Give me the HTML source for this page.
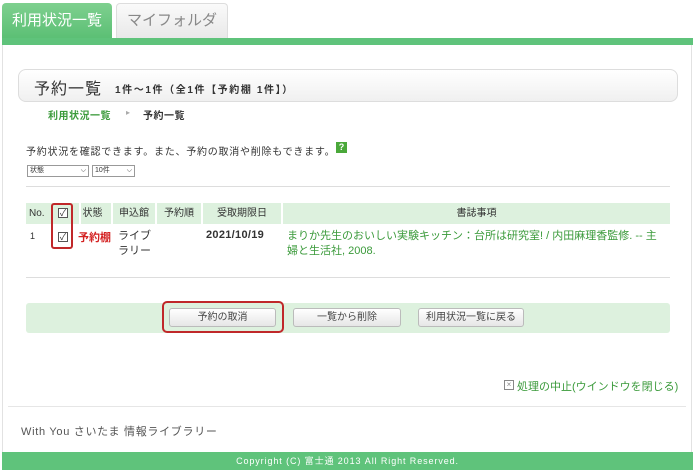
<!DOCTYPE html>
<html><head><meta charset="utf-8"><style>
*{margin:0;padding:0;box-sizing:border-box}
body{width:695px;height:473px;background:#fff;font-family:"Liberation Sans","Noto Sans CJK JP",sans-serif;color:#333;position:relative;overflow:hidden;font-size:11px}
.a{position:absolute}
.tab1{left:2px;top:3px;width:110px;height:36px;background:linear-gradient(#7fd08f,#5bbf74);color:#fff;font-size:15px;line-height:36px;text-align:center;border-radius:4px 4px 0 0}
.tab2{left:116px;top:3px;width:112px;height:36px;background:linear-gradient(#fafafa,#e8e8e8);border:1px solid #ddd;border-bottom:none;color:#888;font-size:15px;line-height:34px;text-align:center;border-radius:4px 4px 0 0}
.bar{left:2px;top:38px;width:691px;height:7px;background:#5fc37b}
.frame{left:2px;top:45px;width:690px;height:408px;border-left:1px solid #e2e2e2;border-right:1px solid #e2e2e2}
.title{left:18px;top:69px;width:660px;height:33px;border:1px solid #ddd;border-radius:8px;background:linear-gradient(#fff,#f0f0f0)}
.btn{top:308px;height:19px;border:1px solid #bbb;border-radius:3px;background:linear-gradient(#fff,#e6e6e6);font-size:10px;text-align:center;line-height:17px;color:#444}
.hr{height:1px;background:#ddd}
.cb{width:10px;height:10px;border:1px solid #555;font-size:9px;line-height:8px;text-align:center;background:#fff}
.h{position:absolute;top:0;text-align:center}
</style></head><body>
<div class="a tab1">利用状況一覧</div>
<div class="a tab2">マイフォルダ</div>
<div class="a bar"></div>
<div class="a frame"></div>
<div class="a title"></div>
<div class="a" style="left:34px;top:75px;font-size:16px;color:#333;letter-spacing:1px">予約一覧</div>
<div class="a" style="left:115px;top:81px;font-size:10px;font-weight:bold;color:#333;letter-spacing:1.6px">1件～1件（全1件【予約棚 1件】）</div>
<div class="a" style="left:48px;top:107px;font-size:10px;font-weight:bold;color:#3a9a3a;letter-spacing:0.5px">利用状況一覧</div>
<div class="a" style="left:126px;top:108px;font-size:8px;color:#aaa">▸</div>
<div class="a" style="left:143px;top:107px;font-size:10px;font-weight:bold;letter-spacing:0.5px">予約一覧</div>
<div class="a" style="left:26px;top:143px;font-size:10px;letter-spacing:0.75px">予約状況を確認できます。また、予約の取消や削除もできます。</div>
<div class="a" style="left:336px;top:142px;width:11px;height:11px;background:#4aa83a;color:#fff;font-size:9px;line-height:11px;text-align:center;font-weight:bold">?</div>
<div class="a" style="left:27px;top:165px;width:62px;height:12px;border:1px solid #999;font-size:7px;line-height:10px;padding-left:2px">状態<span style="position:absolute;right:2px">⌵</span></div>
<div class="a" style="left:92px;top:165px;width:43px;height:12px;border:1px solid #999;font-size:7px;line-height:10px;padding-left:2px">10件<span style="position:absolute;right:2px">⌵</span></div>
<div class="a hr" style="left:26px;top:186px;width:644px"></div>
<div class="a" style="left:26px;top:203px;width:644px;height:21px;background:#ddf1de"></div>
<div class="a" style="left:26px;top:203px;width:644px;height:21px;font-size:10px;line-height:21px">
<span class="h" style="left:3px">No.</span>
<span class="h" style="left:53px;width:27px">状態</span>
<span class="h" style="left:87px;width:42px">申込館</span>
<span class="h" style="left:131px;width:44px">予約順</span>
<span class="h" style="left:177px;width:78px">受取期限日</span>
<span class="h" style="left:257px;width:387px">書誌事項</span>
</div>
<div class="a" style="left:79px;top:203px;width:2px;height:21px;background:#fff"></div>
<div class="a" style="left:111px;top:203px;width:2px;height:21px;background:#fff"></div>
<div class="a" style="left:155px;top:203px;width:2px;height:21px;background:#fff"></div>
<div class="a" style="left:201px;top:203px;width:2px;height:21px;background:#fff"></div>
<div class="a" style="left:281px;top:203px;width:2px;height:21px;background:#fff"></div>
<div class="a cb" style="left:58px;top:208px">✓</div>
<div class="a cb" style="left:58px;top:232px">✓</div>
<div class="a" style="left:51px;top:203px;width:22px;height:46px;border:2px solid #c0282a;border-radius:3px"></div>
<div class="a" style="left:30px;top:231px;font-size:9px">1</div>
<div class="a" style="left:78px;top:229px;font-size:11px;color:#d32020;font-weight:bold">予約棚</div>
<div class="a" style="left:118px;top:229px;font-size:11px;line-height:15px">ライブ<br>ラリー</div>
<div class="a" style="left:206px;top:229px;font-size:11px;font-weight:bold;letter-spacing:0.3px">2021/10/19</div>
<div class="a" style="left:287px;top:229px;width:380px;font-size:11px;line-height:15px;color:#3a9a3a">まりか先生のおいしい実験キッチン：台所は研究室! / 内田麻理香監修. -- 主婦と生活社, 2008.</div>
<div class="a hr" style="left:26px;top:277px;width:644px"></div>
<div class="a" style="left:26px;top:303px;width:644px;height:30px;background:#ddf1de;border-radius:3px"></div>
<div class="a btn" style="left:169px;width:107px">予約の取消</div>
<div class="a btn" style="left:293px;width:108px">一覧から削除</div>
<div class="a btn" style="left:418px;width:106px">利用状況一覧に戻る</div>
<div class="a" style="left:162px;top:301px;width:122px;height:32px;border:2px solid #c0282a;border-radius:5px"></div>
<div class="a" style="left:504px;top:380px;width:10px;height:10px;border:1px solid #888;font-size:8px;line-height:8px;text-align:center;color:#888">×</div>
<div class="a" style="left:517px;top:378px;font-size:11px;color:#3a9a3a">処理の中止(ウインドウを閉じる)</div>
<div class="a hr" style="left:8px;top:406px;width:678px;background:#e6e6e6"></div>
<div class="a" style="left:21px;top:423px;font-size:11px;color:#555;letter-spacing:0.7px">With You さいたま 情報ライブラリー</div>
<div class="a" style="left:2px;top:452px;width:691px;height:18px;background:#5fc37b;color:#fff;font-size:9px;line-height:18px;text-align:center;letter-spacing:0.9px">Copyright (C) 富士通 2013 All Right Reserved.</div>
</body></html>
